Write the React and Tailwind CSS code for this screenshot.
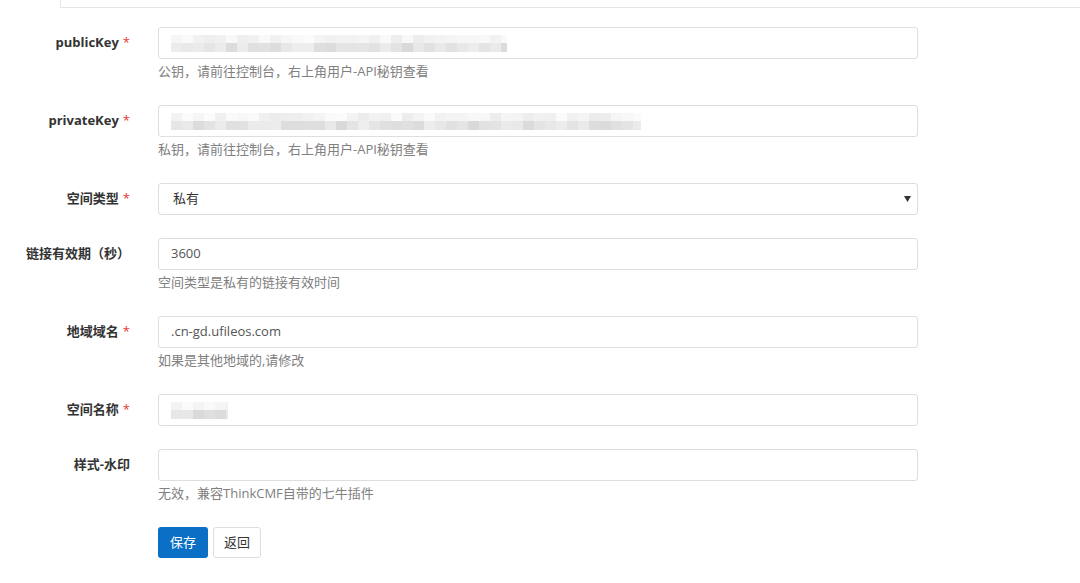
const FONT = 'font-["Open_Sans","Noto_Sans_CJK_SC",sans-serif]'

// pixelated blur blocks standing in for hidden keys
function shades(n, seed, base, spread) {
  const out = []
  let s = seed
  for (let i = 0; i < n; i++) {
    s = (s * 9301 + 49297) % 233280
    const v = Math.round(base + (s / 233280) * spread)
    out.push(`rgb(${v},${v},${v})`)
  }
  return out
}

function Mosaic({ width, seed }) {
  const n = Math.ceil(width / 11)
  const top = shades(n, seed, 236, 16)
  const bottom = shades(n, seed + 7, 216, 22)
  return (
    <div className="flex flex-col" style={{ width }}>
      <div className="flex h-[8px] overflow-hidden">
        {top.map((c, i) => (
          <div key={i} className="h-full w-[11px] shrink-0" style={{ background: c }} />
        ))}
      </div>
      <div className="flex h-[9px] overflow-hidden">
        {bottom.map((c, i) => (
          <div key={i} className="h-full w-[11px] shrink-0" style={{ background: c }} />
        ))}
      </div>
    </div>
  )
}

function Row({ label, required, hint, children }) {
  return (
    <div className="flex items-start mb-[23px]">
      <div className="w-[158px] h-[32px] pr-[28px] flex items-center justify-end text-[13px] font-bold text-[#333]">
        {label}
        {required && <span className="text-[#e53935] ml-[4px] font-normal">*</span>}
      </div>
      <div className="w-[760px]">
        {children}
        {hint && (
          <div className="mt-[3px] mb-[2px] text-[13px] leading-[18px] text-[#808080]">{hint}</div>
        )}
      </div>
    </div>
  )
}

function Field({ value, children }) {
  return (
    <div className="h-[32px] border border-[#dedede] rounded-[3px] bg-white flex items-center px-[12px] text-[13px] text-[#555]">
      {value}
      {children}
    </div>
  )
}

export default function App() {
  return (
    <div className={`w-[1080px] h-[583px] bg-white overflow-hidden ${FONT}`}>
      <div className="ml-[60px] h-[8px] border-l border-b border-[#e6e6e6]" />

      <div className="mt-[19px]">
        <Row label="publicKey" required hint="公钥，请前往控制台，右上角用户-API秘钥查看">
          <Field>
            <Mosaic width={336} seed={11} />
          </Field>
        </Row>

        <Row label="privateKey" required hint="私钥，请前往控制台，右上角用户-API秘钥查看">
          <Field>
            <Mosaic width={470} seed={29} />
          </Field>
        </Row>

        <Row label="空间类型" required>
          <div className="h-[32px] border border-[#dedede] rounded-[3px] bg-white flex items-center justify-between pl-[14px] pr-[6px] text-[13px] text-[#333]">
            <span>私有</span>
            <svg width="7" height="6" viewBox="0 0 7 6">
              <path d="M0 0h7L3.5 6z" fill="#333" />
            </svg>
          </div>
        </Row>

        <Row label="链接有效期（秒）" hint="空间类型是私有的链接有效时间">
          <Field value="3600" />
        </Row>

        <Row label="地域域名" required hint="如果是其他地域的,请修改">
          <Field value=".cn-gd.ufileos.com" />
        </Row>

        <Row label="空间名称" required>
          <Field>
            <Mosaic width={57} seed={5} />
          </Field>
        </Row>

        <Row label="样式-水印" hint="无效，兼容ThinkCMF自带的七牛插件">
          <Field />
        </Row>

        <div className="flex pl-[158px] gap-[5px]">
          <button className="w-[50px] h-[31px] rounded-[3px] bg-[#0b6fc6] text-white text-[13px]">保存</button>
          <button className="w-[48px] h-[31px] rounded-[3px] border border-[#dedede] bg-white text-[#333] text-[13px]">返回</button>
        </div>
      </div>
    </div>
  )
}
